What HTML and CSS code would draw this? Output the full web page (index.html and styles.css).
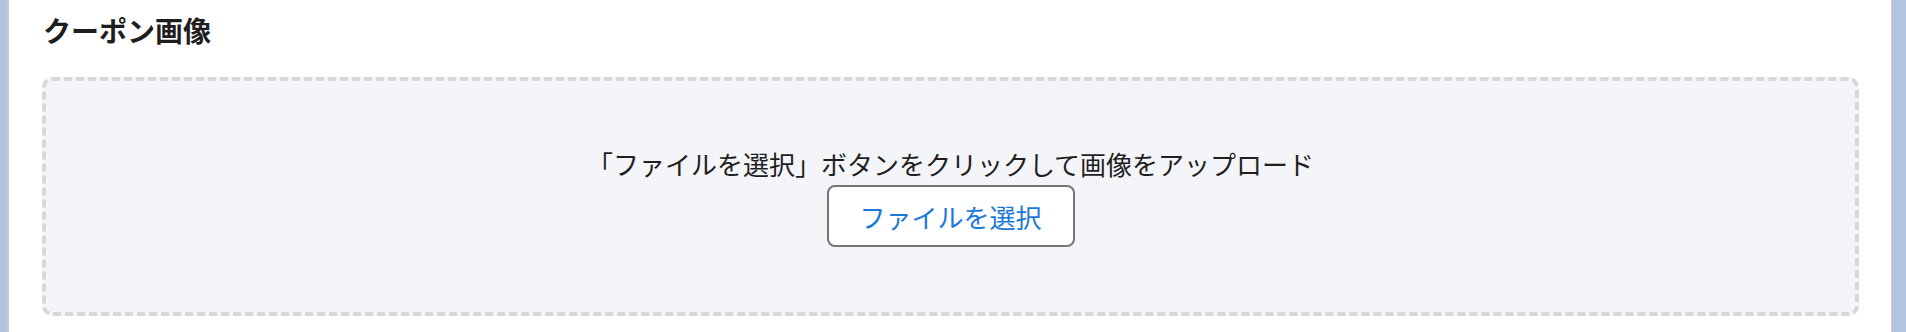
FILE: index.html
```html
<!DOCTYPE html>
<html lang="ja">
<head>
<meta charset="utf-8">
<title>クーポン画像</title>
<link rel="stylesheet" href="styles.css">
</head>
<body>
<div class="frame">
  <div class="edge edge-left"></div>
  <main class="panel">
    <h2 class="title">クーポン画像</h2>
    <div class="dropzone">
      <p class="hint">「ファイルを選択」ボタンをクリックして画像をアップロード</p>
      <button class="pick" type="button">ファイルを選択</button>
    </div>
  </main>
  <div class="edge edge-right"></div>
</div>
</body>
</html>
```

FILE: styles.css
```css
html, body {
  margin: 0;
  padding: 0;
  height: 100%;
  background: #ffffff;
}

body {
  font-family: "Noto Sans CJK JP", "Noto Sans", sans-serif;
  color: #1f1f1f;
}

.frame {
  display: flex;
  height: 332px;
}

.edge {
  background: #b1c4e2;
  flex: none;
}

.edge-left {
  width: 7px;
  border-right: 2px solid #c6c9cf;
}

.edge-right {
  width: 13px;
  border-left: 2px solid #c6c9cf;
}

.panel {
  flex: 1;
  min-width: 0;
  padding: 10px 32px 16px 33px;
  display: flex;
  flex-direction: column;
}

.title {
  margin: 0 0 0 1px;
  font-size: 28px;
  line-height: 41px;
  font-weight: 700;
  color: #1e1e1e;
}

.dropzone {
  margin-top: 26px;
  flex: 1;
  background: #f4f5f9;
  border: 4px dashed #d8d8d8;
  border-radius: 10px;
  display: flex;
  flex-direction: column;
  align-items: center;
  justify-content: center;
}

.hint {
  margin: 0;
  font-size: 26px;
  line-height: 36px;
  color: #1f1f1f;
}

.pick {
  margin-top: 3px;
  width: 248px;
  height: 62px;
  background: #ffffff;
  border: 2px solid #767676;
  border-radius: 8px;
  font-family: "Noto Sans CJK JP", "Noto Sans", sans-serif;
  font-size: 26px;
  color: #1b78d8;
  padding: 0;
}
```
